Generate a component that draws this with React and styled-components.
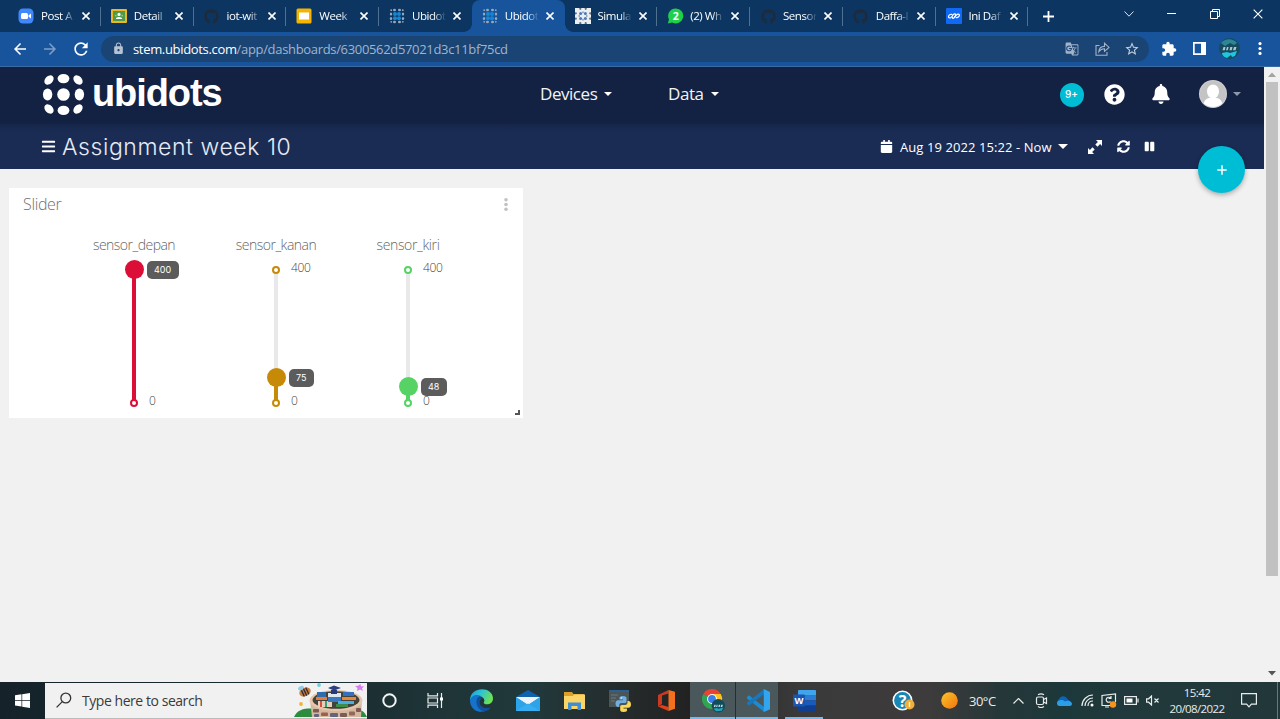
import React from "react";
import styled, { createGlobalStyle, css } from "styled-components";
import {
  FaGithub, FaCalendar, FaSyncAlt, FaPause, FaBars, FaBell, FaQuestionCircle,
} from "react-icons/fa";
import { MdExtension, MdStarBorder, MdGTranslate, MdLock, MdRefresh, MdArrowBack, MdArrowForward } from "react-icons/md";

const Global = createGlobalStyle`
  * { box-sizing: border-box; }
  html, body { margin: 0; padding: 0; overflow: hidden; }
  body { font-family: "Open Sans", "Noto Sans", sans-serif; background: #f1f1f1; }
  svg { display: block; flex: none; }
`;

const Screen = styled.div`
  width: 1280px;
  height: 719px;
  display: flex;
  flex-direction: column;
  overflow: hidden;
`;

const Cell = styled.div`
  flex: none;
  width: ${(p) => p.$w}px;
  height: ${(p) => (p.$h ? `${p.$h}px` : "100%")};
  display: flex;
  align-items: center;
  justify-content: center;
  color: ${(p) => p.$color || "inherit"};
`;

const Spacer = styled.div`
  flex: ${(p) => (p.$w ? `none` : 1)};
  width: ${(p) => (p.$w ? `${p.$w}px` : "auto")};
`;

/* ---------- browser chrome ---------- */

const TabStrip = styled.div`
  flex: none;
  height: 32px;
  display: flex;
  padding: 0 1px 0 8px;
  background: #0c3661;
  color: #fff;
`;

const Tab = styled.div`
  position: relative;
  flex: none;
  width: 92.75px;
  height: 32px;
  display: flex;
  align-items: center;
  padding: 0 8px 0 10px;
  border-radius: 8px 8px 0 0;
  background: ${(p) => (p.$active ? "#17549b" : "transparent")};
  ${(p) =>
    p.$line &&
    css`
      &::after {
        content: "";
        position: absolute;
        right: 0;
        top: 7px;
        width: 1px;
        height: 19px;
        background: #50708f;
      }
    `}
  ${(p) =>
    p.$active &&
    css`
      &::before {
        content: "";
        position: absolute;
        left: -8px;
        right: -8px;
        bottom: 0;
        height: 8px;
        background:
          radial-gradient(circle at 0 0, transparent 7.5px, #17549b 8px) left / 8px 8px no-repeat,
          radial-gradient(circle at 100% 0, transparent 7.5px, #17549b 8px) right / 8px 8px no-repeat;
      }
    `}
`;

const TabTitle = styled.span`
  flex: none;
  width: 37px;
  margin-left: 7px;
  white-space: nowrap;
  font-size: 11.5px;
  line-height: 16px;
  letter-spacing: -0.45px;
  -webkit-mask-image: linear-gradient(90deg, #000 58%, transparent 92%);
  mask-image: linear-gradient(90deg, #000 58%, transparent 92%);
`;

const TabClose = styled.span`
  display: flex;
  margin-left: 4px;
`;

const WindowButtons = styled.div`
  display: flex;
  height: 27px;
  margin-left: auto;
`;

const Toolbar = styled.div`
  flex: none;
  height: 35px;
  display: flex;
  align-items: center;
  padding: 0 6px 1px 5px;
  background: #17549b;
  border-bottom: 1px solid #3a6aa3;
  color: #fff;
`;

const Omnibox = styled.div`
  flex: 1;
  height: 26px;
  margin: 0 5px;
  padding: 0 2px 0 10px;
  border-radius: 13px;
  background: #1a4474;
  display: flex;
  align-items: center;
`;

const Url = styled.span`
  margin-left: 8px;
  font-size: 13px;
  line-height: 18px;
  letter-spacing: ${(p) => p.$ls || 0}px;
  color: #9fb5cf;
  white-space: nowrap;
  b { font-weight: 400; color: #fff; }
`;

/* ---------- ubidots page ---------- */

const Viewport = styled.div`
  flex: none;
  height: 615px;
  display: flex;
  background: #f1f1f1;
`;

const Page = styled.div`
  position: relative;
  width: 1264px;
`;

const Header = styled.header`
  height: 57px;
  display: flex;
  align-items: center;
  padding: 0 0 3px 42px;
  background: #132142;
  color: #fff;
`;

const Wordmark = styled.span`
  width: 448px;
  margin: 0 0 3px 7px;
  font: 700 38px/44px "Liberation Sans", sans-serif;
  letter-spacing: -1.1px;
`;

const NavItem = styled.div`
  width: 128px;
  display: flex;
  align-items: center;
  font-size: 17px;
  line-height: 24px;
  color: #f2f4f8;
`;

const NavText = styled.span`
  letter-spacing: ${(p) => p.$ls}px;
`;

const Caret = styled.i`
  width: 0;
  height: 0;
  margin-left: ${(p) => p.$ml || 0}px;
  border: ${(p) => p.$s}px solid transparent;
  border-top-color: ${(p) => p.$color || "#fff"};
  border-bottom: 0;
`;

const CountBadge = styled.div`
  width: 24px;
  height: 24px;
  margin-top: 1px;
  border-radius: 50%;
  background: #00bdd6;
  font: 500 10px/23px Inter, sans-serif;
  text-align: center;
`;

const SubHeader = styled.div`
  height: 45px;
  display: flex;
  align-items: center;
  padding-left: 41px;
  background: linear-gradient(#16264a, #1a2c54 8px);
  color: #fff;
`;

const Title = styled.h1`
  width: 818px;
  margin: 0 0 0 6px;
  font: 300 23px/30px Inter, sans-serif;
  letter-spacing: 0.57px;
  color: #e6eaf3;
`;

const DateRange = styled.span`
  margin-left: 7px;
  font-size: 13px;
  font-weight: 500;
  line-height: 20px;
  width: 152px;
  white-space: nowrap;
  letter-spacing: ${(p) => p.$ls || 0}px;
`;

const AddButton = styled.button`
  position: absolute;
  left: 1198px;
  top: 79px;
  width: 47px;
  height: 47px;
  padding: 0;
  border: 0;
  border-radius: 50%;
  background: #00bdd6;
  box-shadow: 0 2px 5px rgba(0, 0, 0, 0.3);
  display: flex;
  align-items: center;
  justify-content: center;
`;

const Widget = styled.section`
  position: relative;
  width: 514px;
  height: 229.5px;
  margin: 19px 0 0 9px;
  background: #fff;
`;

const WidgetHead = styled.div`
  height: 32px;
  display: flex;
  align-items: center;
  justify-content: space-between;
  padding: 0 14px;
  font-size: 16px;
  font-weight: 300;
  letter-spacing: -0.35px;
  color: #707070;
`;

const Sliders = styled.div`
  display: flex;
  justify-content: center;
  gap: 60px;
  padding-top: 15px;
`;

const Column = styled.div`
  width: ${(p) => p.$w}px;
  display: flex;
  flex-direction: column;
  align-items: center;
`;

const Name = styled.span`
  font-size: 14px;
  font-weight: 300;
  line-height: 20px;
  color: #666;
  white-space: nowrap;
  letter-spacing: ${(p) => p.$ls}px;
`;

const Track = styled.div`
  position: relative;
  width: 4px;
  height: 133px;
  margin-top: 14.5px;
  background: #e9e9e9;
`;

const Fill = styled.div`
  position: absolute;
  left: 0;
  bottom: 0;
  width: 4px;
  background: ${(p) => p.$color};
`;

const Stop = styled.div`
  position: absolute;
  left: -2px;
  ${(p) => (p.$top ? "top: -4px;" : "bottom: -4px;")}
  width: 8px;
  height: 8px;
  border: 2px solid ${(p) => p.$color};
  border-radius: 50%;
  background: #fff;
`;

const StopLabel = styled.span`
  position: absolute;
  left: 17px;
  ${(p) => (p.$top ? "top: -10px;" : "bottom: -6px;")}
  font-size: 12px;
  font-weight: 300;
  line-height: 16px;
  letter-spacing: -0.4px;
  color: #444;
`;

const Thumb = styled.div`
  position: absolute;
  left: -7.5px;
  width: 19px;
  height: 19px;
  margin-bottom: -9.5px;
  border-radius: 50%;
  background: ${(p) => p.$color};
`;

const Bubble = styled.span`
  position: absolute;
  left: 22px;
  top: 1px;
  height: 18px;
  padding: 0 7.5px;
  border-radius: 5px;
  background: #5c5c5c;
  color: #fff;
  font: 400 9px/18px Inter, sans-serif;
`;

const Resize = styled.i`
  position: absolute;
  right: 3px;
  bottom: 3px;
  width: 5px;
  height: 5px;
  border-right: 2px solid #555;
  border-bottom: 2px solid #555;
`;

const ScrollBar = styled.div`
  width: 16px;
  display: flex;
  flex-direction: column;
  align-items: center;
  background: #f1f1f1;
`;

const ScrollThumb = styled.div`
  width: 12px;
  height: 494px;
  background: #c1c1c1;
`;

/* ---------- taskbar ---------- */

const Taskbar = styled.div`
  flex: none;
  height: 37px;
  display: flex;
  align-items: center;
  color: #e8ecec;
  background: linear-gradient(90deg, #15222a 0, #1c3034 370px, #21393b 530px, #252a2b 630px, #222 690px, #3b3a3a 800px, #3d3b3b 930px, #263739 1000px, #1d383a 1060px, #22393c 1160px, #21373a 1280px);
`;

const Search = styled.div`
  flex: none;
  width: 322px;
  height: 36px;
  display: flex;
  align-items: center;
  padding-left: 11px;
  background: #f1f1f1;
  border-bottom: 1px solid #bbb;
  color: #3a3a3a;
  font-size: 14px;
`;

const SearchText = styled.span`
  flex: 1;
  margin-left: 10px;
  letter-spacing: -0.45px;
`;

const AppCell = styled(Cell)`
  background: ${(p) => (p.$open ? "#4a585b" : "transparent")};
  box-shadow: ${(p) => (p.$run ? "inset 0 -2px #76b9ed" : "none")};
  margin-right: ${(p) => p.$mr || 0}px;
  padding-left: ${(p) => p.$pl || 0}px;
`;

const Temp = styled.span`
  flex: none;
  width: 37px;
  font-size: 13px;
  letter-spacing: -0.5px;
`;

const Clock = styled.div`
  flex: none;
  width: 68px;
  text-align: center;
  font-size: 11.5px;
  line-height: 16px;
  letter-spacing: -0.6px;
`;

const ShowDesktop = styled.i`
  width: 1px;
  height: 37px;
  margin-left: 10px;
  background: #66787a;
`;

/* ---------- drawings ---------- */

const Cross = ({ s = 8, w = 1.6, color = "#fff" }) => (
  <svg width={s} height={s} viewBox="0 0 8 8"><path d="M.5.5l7 7M7.5.5l-7 7" stroke={color} strokeWidth={w} /></svg>
);

const ZoomIcon = () => (
  <svg width="16" height="16" viewBox="0 0 16 16">
    <rect x=".5" y=".5" width="15" height="15" rx="4.5" fill="#4087fc" />
    <rect x="3" y="5" width="7" height="6" rx="1.5" fill="#fff" />
    <path d="M10.6 7.2L13 5.4v5.2l-2.4-1.8z" fill="#fff" />
  </svg>
);
const ClassroomIcon = () => (
  <svg width="16" height="16" viewBox="0 0 16 16">
    <rect y="1" width="16" height="14" rx="1" fill="#e9b824" />
    <rect x="2" y="3" width="12" height="10" fill="#4f9a48" />
    <circle cx="8" cy="6.4" r="1.6" fill="#fff" />
    <path d="M4.8 11c0-2.8 6.4-2.8 6.4 0z" fill="#fff" />
    <circle cx="4.8" cy="7.6" r=".9" fill="#8ac7a0" /><circle cx="11.2" cy="7.6" r=".9" fill="#8ac7a0" />
  </svg>
);
const SlidesIcon = () => (
  <svg width="16" height="16" viewBox="0 0 16 16">
    <rect x=".5" y=".5" width="15" height="15" rx="1.5" fill="#f4b400" />
    <rect x="3" y="4.5" width="10" height="7" fill="#fff" />
  </svg>
);
const UbiTabIcon = () => (
  <svg width="16" height="16" viewBox="0 0 16 16">
    <g fill="#98a7b9">
      <ellipse cx="5.5" cy="2" rx="1.5" ry="1.2" /><ellipse cx="10.5" cy="2" rx="1.5" ry="1.2" />
      <ellipse cx="5.5" cy="14" rx="1.5" ry="1.2" /><ellipse cx="10.5" cy="14" rx="1.5" ry="1.2" />
      <ellipse cx="2" cy="6" rx="1.2" ry="1.5" /><ellipse cx="2" cy="10.5" rx="1.2" ry="1.5" />
      <ellipse cx="14" cy="6" rx="1.2" ry="1.5" /><ellipse cx="14" cy="10.5" rx="1.2" ry="1.5" />
      <circle cx="2.2" cy="2.2" r=".9" /><circle cx="13.8" cy="2.2" r=".9" /><circle cx="2.2" cy="13.8" r=".9" /><circle cx="13.8" cy="13.8" r=".9" />
    </g>
    <g fill="#1786d1"><circle cx="6" cy="6" r="2" /><circle cx="10" cy="6" r="2" /><circle cx="6" cy="10.3" r="2" /><circle cx="10" cy="10.3" r="2" /></g>
  </svg>
);
const SimulaIcon = () => (
  <svg width="16" height="16" viewBox="0 0 16 16">
    <rect width="16" height="16" fill="#eceff2" />
    <g fill="#4a7ab5"><circle cx="5.600" cy="5.600" r="1.500" /><circle cx="10.400" cy="5.600" r="1.500" /><circle cx="5.600" cy="10.400" r="1.500" /><circle cx="10.400" cy="10.400" r="1.500" /></g>
    <path d="M8 3.500v1.500M8 11v1.500M3.500 8h1.500M11 8h1.500" stroke="#6f93bd" strokeWidth="1.400" />
    <g fill="#66707c"><circle cx="5.3" cy=".8" r="1.100" /><circle cx="10.7" cy=".8" r="1.100" /><circle cx="5.3" cy="15.2" r="1.100" /><circle cx="10.7" cy="15.2" r="1.100" /><circle cx=".8" cy="5.3" r="1.100" /><circle cx=".8" cy="10.7" r="1.100" /><circle cx="15.2" cy="5.3" r="1.100" /><circle cx="15.2" cy="10.7" r="1.100" /></g>
  </svg>
);
const WhatsIcon = () => (
  <svg width="17" height="16" viewBox="0 0 17 16">
    <path d="M8.8.4a7.5 7.5 0 1 1-3.6 14.1L.8 15.6 2 11.4A7.5 7.5 0 0 1 8.8.4z" fill="#1ed14b" />
    <text x="8.8" y="11.8" fontSize="10.5" fontWeight="700" fill="#fff" textAnchor="middle" fontFamily="Open Sans, sans-serif">2</text>
  </svg>
);
const IniIcon = () => (
  <svg width="16" height="16" viewBox="0 0 16 16">
    <rect width="16" height="16" rx="1" fill="#1069f5" />
    <g stroke="#fff" strokeWidth="1.200" fill="none" strokeLinecap="round">
      <path d="M5.800 6.300C4 6 2.500 7.300 2.500 8.700c0 1.500 2 1.700 3 .3l1.800-2.300c1-1.300 2.600-1 2.400.3-.1.800-.8 1.500-1.500 2.300" />
      <path d="M6.400 9.200c-.3 1.300 1.200 1.500 2.100.3l2-2.500c1.100-1.400 3-1.100 2.900.3-.1 1.500-1.600 2.500-3.200 2.300" />
    </g>
  </svg>
);
const SpiritAvatar = ({ s = 21 }) => (
  <svg width={s} height={s} viewBox="0 0 21 21">
    <circle cx="10.500" cy="10.500" r="10.400" fill="#174a5d" />
    <path d="M2 5c4-5 12-5 16 0l-3 2-4-2-5 3z" fill="#2b8796" />
    <path d="M3 15l5-1 3 1 7-2-2 5-3 1-1-2-4 3c-3-1-4-2-5-4z" fill="#20c5df" />
    <path d="M3.500 12.200l1-3.200h2l-.7 3.200zM7 12.200L8 9h1.600l-.8 3.200zM10.500 12.200l.800-3.200h2.200l-.8 3.200zM14 12.200L15 9h2.500l-1 3.200z" fill="#a5c9d1" />
  </svg>
);
const UbiLogo = () => (
  <svg width="43" height="43" viewBox="0 0 43 43" fill="#fff">
    <circle cx="21.500" cy="21.500" r="6.300" />
    <ellipse cx="21.500" cy="5.600" rx="5.900" ry="4.700" /><ellipse cx="21.500" cy="37.400" rx="5.900" ry="4.700" />
    <ellipse cx="5.600" cy="21.500" rx="4.700" ry="5.900" /><ellipse cx="37.400" cy="21.500" rx="4.700" ry="5.900" />
    <ellipse cx="7" cy="7" rx="5.300" ry="3.900" transform="rotate(-45 7 7)" />
    <ellipse cx="36" cy="7" rx="5.300" ry="3.900" transform="rotate(45 36 7)" />
    <ellipse cx="7" cy="36" rx="5.300" ry="3.900" transform="rotate(45 7 36)" />
    <ellipse cx="36" cy="36" rx="5.300" ry="3.900" transform="rotate(-45 36 36)" />
  </svg>
);
const ExpandIcon = () => (
  <svg width="14" height="14" viewBox="0 0 14 14" fill="#fff">
    <path d="M8 0h6v6l-1.900-1.900-2.600 2.600-2.200-2.200 2.600-2.600zM6 14H0V8l1.900 1.900 2.600-2.600 2.200 2.200-2.600 2.600z" />
  </svg>
);
const UserAvatar = () => (
  <svg width="28" height="28" viewBox="0 0 28 28">
    <clipPath id="face"><circle cx="14" cy="14" r="13" /></clipPath>
    <circle cx="14" cy="14" r="14" fill="#cfcfcf" />
    <circle cx="14" cy="14" r="13" fill="#c4c4c4" />
    <g clipPath="url(#face)" fill="#fff">
      <ellipse cx="14" cy="11.500" rx="6" ry="7" />
      <path d="M4 28c0-8 4-10.500 10-10.500S24 20 24 28z" />
    </g>
  </svg>
);
const Dots = ({ color, h = 13, r = 1.6 }) => (
  <svg width="4" height={h} viewBox={`0 0 4 ${h}`} fill={color}>
    <circle cx="2" cy={r} r={r} /><circle cx="2" cy={h / 2} r={r} /><circle cx="2" cy={h - r} r={r} />
  </svg>
);
const ShareIcon = () => (
  <svg width="15" height="14" viewBox="0 0 15 14" fill="none" stroke="#a3b3c8" strokeWidth="1.100">
    <path d="M4.500 3.500H1v9.700h11V10" /><path d="M3.800 9.800C4 6.500 6 4.500 9.500 4.400V1.200L14 5.400 9.500 9.400V6.800C7 6.700 5.300 7.700 3.800 9.800z" />
  </svg>
);
const WindowsIcon = () => (
  <svg width="15" height="15" viewBox="0 0 15 15" fill="#fff">
    <path d="M0 2.200l6.500-.9V7H0zM7.200 1.200L15 0v7H7.200zM0 7.800h6.500v5.700L0 12.600zM7.200 7.800H15V15l-7.800-1.200z" />
  </svg>
);
const WellIcon = () => (
  <svg width="73" height="34" viewBox="0 0 73 34">
    <path d="M0 34c3-7 9-8.500 17-8.500h40c8 0 13 1.500 16 8.500z" fill="#2d8b3d" />
    <path d="M16 17l2 17h49l1-17z" fill="#d3b79f" />
    <ellipse cx="42" cy="17.500" rx="26.500" ry="10.500" fill="#e6c6ab" />
    <g fill="#7b5b54">
      <rect x="19" y="26" width="6" height="3.500" rx="1" /><rect x="27" y="29.500" width="7" height="3.500" rx="1" fill="#9b604f" /><rect x="36" y="30" width="8" height="4" rx="1" fill="#65647e" /><rect x="46" y="30" width="7" height="4" rx="1" /><rect x="55" y="28.500" width="6" height="4" rx="1" fill="#93695a" /><rect x="62" y="25" width="5" height="4" rx="1" /><rect x="20" y="31" width="5" height="3" rx="1" fill="#65647e" />
    </g>
    <ellipse cx="42" cy="17" rx="23.500" ry="8.800" fill="#43423d" />
    <g>
      <rect x="23" y="9" width="9" height="5" fill="#2e6cae" /><rect x="22" y="14" width="11" height="3" fill="#e47b3c" />
      <rect x="24" y="18" width="14" height="6" fill="#e4ceb8" /><rect x="26" y="18" width="2" height="6" fill="#d84d3b" /><rect x="31" y="18" width="2" height="6" fill="#35a079" />
      <rect x="34" y="10" width="13" height="4" fill="#dee7ef" /><rect x="34" y="14" width="13" height="5" fill="#3a78bd" />
      <rect x="49" y="9" width="11" height="4" fill="#356fc1" /><rect x="48" y="14" width="14" height="3" fill="#e78838" />
      <rect x="44" y="18" width="16" height="3" fill="#46b0df" /><rect x="42" y="21" width="12" height="3" fill="#3d8d48" />
      <path d="M34 5l6-2.500L47 5l-7 2.500z" fill="#2a417f" /><path d="M37 7h6v4h-6z" fill="#27397a" />
    </g>
    <g transform="rotate(-25 11 9)"><ellipse cx="11" cy="9" rx="6" ry="4.200" fill="#c5803a" /><path d="M8.500 5.200v7.600M11 5v8M13.500 5.300v7.400" stroke="#33263a" strokeWidth="1.300" /><ellipse cx="9" cy="3.800" rx="3" ry="2" fill="#91cbe4" /></g>
    <circle cx="25" cy="2" r="1.900" fill="#69d3e0" /><circle cx="7" cy="21" r="1.900" fill="#f5b22f" />
    <path d="M66.500 1l.5 2.500 3-.5-2 2.500 1 2.500-3-1.500L63 8l.500-3L61 3l3-.2z" fill="#d77df0" />
  </svg>
);
const EdgeIcon = () => (
  <svg width="23" height="23" viewBox="0 0 23 23">
    <defs>
      <linearGradient id="eg" x1="0" y1="0" x2="1" y2=".4"><stop offset="0" stopColor="#2196e0" /><stop offset=".5" stopColor="#2fc4d5" /><stop offset="1" stopColor="#6be056" /></linearGradient>
    </defs>
    <path d="M0 11.500C0-3.500 23-3 23 9.500c0 4-3 5.800-6 5.800-2.800 0-4-1-3-2.400C16 9 9 4.500 4 8.500 1.500 10 .5 11 0 11.500z" fill="url(#eg)" />
    <path d="M0 12C1 6 7 4.800 11 7c-5 1-5.500 7-2 11 3 3.500 8 2.500 11.500.600C16 25 1 25 0 12z" fill="#1473cc" />
    <path d="M10 7.600C4.500 10 5.500 20 13.500 22.400c3-.400 5.500-2 7.200-4.200-5 2.300-10.700 0-11-4.400-.1-2.300 1-3.500 2.200-4.200z" fill="#124f9c" />
  </svg>
);
const MailIcon = () => (
  <svg width="24" height="21" viewBox="0 0 24 21">
    <path d="M0 7L12 0l12 7v4H0z" fill="#1061ae" /><path d="M0 7h24v14H0z" fill="#1f95df" />
    <path d="M0 7h24l-12 8z" fill="#eef4fa" /><path d="M0 21V7.200L12 15l12-7.800V21z" fill="#2ba4ea" /><path d="M0 21l12-7.500L24 21z" fill="#38adf0" />
  </svg>
);
const FolderIcon = () => (
  <svg width="21" height="18" viewBox="0 0 21 18">
    <path d="M0 0h8l1.500 2H20v4H0z" fill="#dc9f28" /><path d="M0 4h9l1-1.500h11V17H0z" fill="#fbd468" />
    <path d="M4 18v-7.500h13V18h-3.500v-4h-6v4z" fill="#3b8fd4" />
  </svg>
);
const PythonIcon = () => (
  <svg width="22" height="22" viewBox="0 0 22 22">
    <rect width="20" height="17" fill="#4b5558" /><rect width="20" height="2" fill="#2a6093" />
    <path d="M2 5h7M2 8h5M2 11h4" stroke="#6c787b" strokeWidth="1" />
    <path d="M14 6c-3 0-3.500 1-3.500 2v1.500H14v.8H9c-1.600 0-2.500 1.300-2.500 3.200S7.400 17 9 17h1.200v-1.800c0-1.200 1-2.100 2.200-2.100h3.300c1 0 1.800-.8 1.800-1.800V8c0-1-.8-2-3.500-2z" fill="#72aede" />
    <path d="M14.500 22c3 0 3.500-1 3.500-2v-1.500h-3.500v-.8h5c1.600 0 2.500-1.300 2.500-3.200S21.100 11 19.500 11h-1v1.800c0 1.200-1 2.100-2.200 2.100H13c-1 0-1.800.8-1.800 1.800V20c0 1 .8 2 3.300 2z" fill="#f8d856" />
    <circle cx="12.300" cy="8" r=".7" fill="#fff" />
  </svg>
);
const OfficeIcon = () => (
  <svg width="17" height="21" viewBox="0 0 17 21">
    <path d="M0 5l10.500-5v3.500L4 5.500V14l-4 2.500z" fill="#c93a22" />
    <path d="M0 16.500L4 15l6.500 2V21z" fill="#e2401b" />
    <path d="M10.500 0L17 1.800v17L10.500 21z" fill="#f3701f" />
  </svg>
);
const ChromeIcon = () => (
  <svg width="24" height="24" viewBox="0 0 24 24">
    <path d="M10 10L1.300 5A10 10 0 0 1 18.700 5z" fill="#e84335" /><path d="M10 10L1.300 5A10 10 0 0 0 10 20l5-7.500z" fill="#2fa452" />
    <path d="M10 5h8.700A10 10 0 0 1 10 20l5-8z" fill="#fcc31e" />
    <circle cx="10" cy="10" r="4.900" fill="#fff" /><circle cx="10" cy="10" r="3.900" fill="#3b7ee8" />
    <g transform="translate(9.500 10) scale(.65)"><circle cx="10.500" cy="10.500" r="10.400" fill="#124b5a" /><path d="M3 15l5-1 3 1 7-2-2 5-9 1z" fill="#20a5bb" /><path d="M3.500 12.200l1-3.200h2l-.7 3.200zM7 12.200L8 9h1.600l-.8 3.200zM10.500 12.200l.800-3.200h2.200l-.8 3.200zM14 12.200L15 9h2.500l-1 3.200z" fill="#c2dce2" /></g>
  </svg>
);
const CodeIcon = () => (
  <svg width="23" height="23" viewBox="0 0 24 24">
    <path d="M0 8.300l2-1.700L18 19v5L0 9.800z" fill="#1c8bd6" /><path d="M0 15.700l2 1.700L18 5V0L0 14.200z" fill="#1877bd" />
    <path d="M17.500 0L24 3v18l-6.500 3z" fill="#33a5ef" />
  </svg>
);
const WordIcon = () => (
  <svg width="23" height="21" viewBox="0 0 23 21">
    <path d="M5 1a1 1 0 0 1 1-1h16a1 1 0 0 1 1 1v4.500H5z" fill="#41a5ee" /><path d="M5 5.200h18v5.200H5z" fill="#2b7cd3" /><path d="M5 10.400h18v5.200H5z" fill="#185abd" />
    <path d="M5 15.600h18V20a1 1 0 0 1-1 1H6a1 1 0 0 1-1-1z" fill="#103f91" /><rect y="4.500" width="12" height="12" rx="1" fill="#1a55b0" />
    <text x="6" y="14" fontFamily="Liberation Sans, sans-serif" fontSize="9.500" fontWeight="700" fill="#fff" textAnchor="middle">W</text>
  </svg>
);
const HelpIcon = () => (
  <svg width="23" height="21" viewBox="0 0 23 21">
    <circle cx="10.500" cy="10.500" r="10" fill="#fff" /><circle cx="10.500" cy="10.500" r="8.400" fill="#1787b8" />
    <text x="10.500" y="16.500" fontFamily="Open Sans, sans-serif" fontSize="16" fontWeight="700" fill="#fff" textAnchor="middle">?</text>
    <circle cx="17.500" cy="14.500" r="5" fill="#f2ae35" /><path d="M17.500 12v5" stroke="#fff3d6" strokeWidth="1.400" />
  </svg>
);
const line = { fill: "none", stroke: "#e8ecec", strokeWidth: 1.2 };
const TaskViewIcon = () => (
  <svg width="17" height="15" viewBox="0 0 17 15" {...line}><path d="M1 0v2.800h9.500V0M1 15v-2.800h9.500V15M1 5h9.500v5H1zM14.500 0v15" /><path d="M13 4.500h3v3h-3z" fill="#fff" stroke="none" /></svg>
);
const CamIcon = () => (
  <svg width="13" height="15" viewBox="0 0 13 15" {...line}><rect x="1.500" y="4" width="7" height="7.500" rx="1.500" /><path d="M8.500 6.500L11.500 5v5.500l-3-1.500M3 1.800c2-1.300 4-1.300 6 0M3 13.600c2 1.300 4 1.300 6 0" /></svg>
);
const CloudIcon = () => (
  <svg width="16" height="10" viewBox="0 0 16 10"><path d="M3 8.500A3.200 3.200 0 0 1 3 3 4.500 4.500 0 0 1 11 2.600L15 6z" fill="#0d64b8" /><path d="M3 10a2.800 2.800 0 0 1 .5-5.500C6 3.500 8 4.500 9 5.500c3-2 7 0 7 2.300 0 1.400-1 2.200-2.200 2.200z" fill="#2a9fe8" /></svg>
);
const WifiIcon = () => (
  <svg width="13" height="13" viewBox="0 0 13 13" {...line}><path d="M1 12C1 6 6 1 12 1M4 12c0-4.500 3.500-8 8-8M7 12c0-3 2-5 5-5" /><circle cx="11" cy="11" r="1.500" fill="#fff" stroke="none" /></svg>
);
const PcIcon = () => (
  <svg width="16" height="15" viewBox="0 0 16 15" {...line}><path d="M9 12.500H1V2.500L14.500 1v8M4 14h4" /><path d="M9.500 5a2.500 2.500 0 1 0 0 3.500M10 3v2.500H7.500" /><circle cx="12" cy="11.500" r="3.200" fill="#f7941d" stroke="none" /></svg>
);
const BatteryIcon = () => (
  <svg width="15" height="9" viewBox="0 0 15 9" {...line}><rect x=".6" y=".6" width="11.800" height="7.800" /><path d="M14 2.500v4" /><path d="M2.500 2.500h6v4h-6z" fill="#fff" stroke="none" /></svg>
);
const MuteIcon = () => (
  <svg width="14" height="11" viewBox="0 0 14 11" {...line}><path d="M.6 3.800h2L5.500 1v9L2.600 7.200h-2zM8.500 3.500l4 4M12.500 3.500l-4 4" /></svg>
);

/* ---------- composition ---------- */

const gh = <FaGithub size={15} color="#1d2b3c" />;
const TABS = [
  { t: "Post A", icon: <ZoomIcon />, line: true },
  { t: "Detail", icon: <ClassroomIcon />, line: true },
  { t: "iot-wit", icon: gh, line: true },
  { t: "Week", icon: <SlidesIcon />, line: true },
  { t: "Ubidot", icon: <UbiTabIcon /> },
  { t: "Ubidot", icon: <UbiTabIcon />, active: true },
  { t: "Simula", icon: <SimulaIcon />, line: true },
  { t: "(2) Wh", icon: <WhatsIcon />, line: true },
  { t: "Sensor", icon: gh, line: true },
  { t: "Daffa-I", icon: gh, line: true },
  { t: "Ini Daf", icon: <IniIcon />, line: true },
];

const SENSORS = [
  { name: "sensor_depan", value: 400, color: "#dc0d36", w: 83, ls: -0.52 },
  { name: "sensor_kanan", value: 75, color: "#c78a07", w: 81, ls: -0.5 },
  { name: "sensor_kiri", value: 48, color: "#56d364", w: 63, ls: -0.36 },
];

function Slider({ name, value, color, w, ls }) {
  const pct = `${(value / 400) * 100}%`;
  return (
    <Column $w={w}>
      <Name $ls={ls}>{name}</Name>
      <Track>
        <Fill $color={color} style={{ height: pct }} />
        <Stop $top $color={color} />
        <Stop $color={color} />
        {value < 400 && <StopLabel $top>400</StopLabel>}
        <StopLabel>0</StopLabel>
        <Thumb $color={color} style={{ bottom: pct }}>
          <Bubble>{value}</Bubble>
        </Thumb>
      </Track>
    </Column>
  );
}

export default function App() {
  return (
    <Screen>
      <Global />
      <TabStrip>
        {TABS.map((tab, i) => (
          <Tab key={i} $active={tab.active} $line={tab.line}>
            <Cell $w={16}>{tab.icon}</Cell>
            <TabTitle>{tab.t}</TabTitle>
            <TabClose><Cross /></TabClose>
          </Tab>
        ))}
        <Cell $w={40}>
          <svg width="11" height="11" viewBox="0 0 11 11"><path d="M5.500 0v11M0 5.500h11" stroke="#fff" strokeWidth="1.800" /></svg>
        </Cell>
        <WindowButtons>
          <Cell $w={43}><svg width="10" height="6" viewBox="0 0 10 6"><path d="M.5.500L5 5.200 9.500.500" fill="none" stroke="#dbe4ee" /></svg></Cell>
          <Cell $w={43}><svg width="9" height="1"><rect width="9" height="1" fill="#fff" /></svg></Cell>
          <Cell $w={43}><svg width="10" height="10" viewBox="0 0 10 10" fill="none" stroke="#fff"><path d="M.5 2.500h7v7h-7zM2.500 2.500v-2h7v7h-2" /></svg></Cell>
          <Cell $w={43}><Cross s={10} w={0.9} /></Cell>
        </WindowButtons>
      </TabStrip>

      <Toolbar>
        <Cell $w={30}><MdArrowBack size={18} /></Cell>
        <Cell $w={30} $color="#7f9fc8"><MdArrowForward size={18} /></Cell>
        <Cell $w={31}><MdRefresh size={20} /></Cell>
        <Omnibox>
          <Cell $w={14} $color="#b5c2d2"><MdLock size={13} /></Cell>
          <Url $ls={-0.33}><b>stem.ubidots.com</b>/app/dashboards/6300562d57021d3c11bf75cd</Url>
          <Spacer />
          <Cell $w={30} $color="#a3b3c8"><MdGTranslate size={14} /></Cell>
          <Cell $w={30}><ShareIcon /></Cell>
          <Cell $w={30} $color="#c3cedb"><MdStarBorder size={16} /></Cell>
        </Omnibox>
        <Cell $w={30}><MdExtension size={16} /></Cell>
        <Cell $w={30}><svg width="13" height="13" viewBox="0 0 13 13"><path fill="#fff" fillRule="evenodd" d="M0 0h13v13H0zM1.700 1.700v9.600H8V1.700z" /></svg></Cell>
        <Cell $w={31}><SpiritAvatar /></Cell>
        <Cell $w={29}><Dots color="#fff" /></Cell>
      </Toolbar>

      <Viewport>
        <Page>
          <Header>
            <UbiLogo />
            <Wordmark>ubidots</Wordmark>
            <NavItem><NavText $ls={-0.45}>Devices</NavText><Caret $s={4} $ml={7} /></NavItem>
            <NavItem><NavText $ls={-0.45}>Data</NavText><Caret $s={4} $ml={7} /></NavItem>
            <Spacer />
            <Cell $w={55}><CountBadge>9+</CountBadge></Cell>
            <Cell $w={30}><FaQuestionCircle size={21} /></Cell>
            <Cell $w={64}><FaBell size={20} /></Cell>
            <Cell $w={40}><UserAvatar /></Cell>
            <Caret $s={4} $color="#8e98ad" />
            <Spacer $w={23} />
          </Header>
          <SubHeader>
            <FaBars size={15} />
            <Title>Assignment week 10</Title>
            <FaCalendar size={13} />
            <DateRange $ls={0.08}>Aug 19 2022 15:22 - Now</DateRange>
            <Caret $s={5} $ml={6} />
            <Spacer $w={13} />
            <Cell $w={28}><ExpandIcon /></Cell>
            <Cell $w={28}><FaSyncAlt size={13} /></Cell>
            <Cell $w={24}><FaPause size={11} /></Cell>
          </SubHeader>
          <Widget>
            <WidgetHead>
              <span>Slider</span>
              <Cell $w={6}><Dots color="#c2c2c2" h={13} r={1.8} /></Cell>
            </WidgetHead>
            <Sliders>{SENSORS.map((s) => <Slider key={s.name} {...s} />)}</Sliders>
            <Resize />
          </Widget>
          <AddButton aria-label="Add widget">
            <svg width="10" height="10" viewBox="0 0 10 10"><path d="M5 .3v9.400M.3 5h9.400" stroke="#fff" strokeWidth="1.500" /></svg>
          </AddButton>
        </Page>
        <ScrollBar>
          <Cell $w={16} $h={15}><svg width="8" height="5"><path d="M0 5l4-4.500L8 5z" fill="#a3a3a3" /></svg></Cell>
          <ScrollThumb />
          <Spacer />
          <Cell $w={16} $h={18}><svg width="8" height="5"><path d="M0 0l4 4.500L8 0z" fill="#555" /></svg></Cell>
        </ScrollBar>
      </Viewport>

      <Taskbar>
        <Cell $w={45}><WindowsIcon /></Cell>
        <Search>
          <svg width="16" height="16" viewBox="0 0 16 16" fill="none" stroke="#333" strokeWidth="1.300"><circle cx="9.800" cy="6" r="4.900" /><path d="M6.300 9.600L.6 15.400" /></svg>
          <SearchText>Type here to search</SearchText>
          <WellIcon />
        </Search>
        <Cell $w={45}><svg width="15" height="15"><circle cx="7.500" cy="7.500" r="6.200" fill="none" stroke="#f2f4f4" strokeWidth="2" /></svg></Cell>
        <Cell $w={46}><TaskViewIcon /></Cell>
        <Cell $w={47}><EdgeIcon /></Cell>
        <Cell $w={46}><MailIcon /></Cell>
        <Cell $w={46}><FolderIcon /></Cell>
        <Cell $w={46}><PythonIcon /></Cell>
        <Cell $w={47}><OfficeIcon /></Cell>
        <AppCell $w={45} $open $run $mr={1} $pl={2}><ChromeIcon /></AppCell>
        <AppCell $w={42} $open $run $mr={7} $pl={3}><CodeIcon /></AppCell>
        <AppCell $w={38} $run><WordIcon /></AppCell>
        <Spacer $w={56} />
        <Cell $w={49}><HelpIcon /></Cell>
        <Cell $w={41}><Spacer $w={2} /><svg width="17" height="17"><defs><linearGradient id="sun" x1="0" y1="0" x2="1" y2="1"><stop stopColor="#fcc42a" /><stop offset="1" stopColor="#f1750f" /></linearGradient></defs><circle cx="8.500" cy="8.500" r="8.300" fill="url(#sun)" /></svg></Cell>
        <Temp>30°C</Temp>
        <Cell $w={24}><svg width="11" height="6" viewBox="0 0 11 6"><path d="M.5 5.500l5-5 5 5" {...line} /></svg></Cell>
        <Cell $w={22}><CamIcon /></Cell>
        <Cell $w={23}><CloudIcon /></Cell>
        <Cell $w={24}><WifiIcon /></Cell>
        <Cell $w={20}><PcIcon /></Cell>
        <Cell $w={24}><BatteryIcon /></Cell>
        <Cell $w={20}><MuteIcon /></Cell>
        <Clock>15:42<br />20/08/2022</Clock>
        <Cell $w={36}><svg width="16" height="15" viewBox="0 0 16 15" {...line}><path d="M.6.600h14.800v10.600h-5L8 13.800l-2.400-2.600h-5z" /></svg></Cell>
        <ShowDesktop />
      </Taskbar>
    </Screen>
  );
}
